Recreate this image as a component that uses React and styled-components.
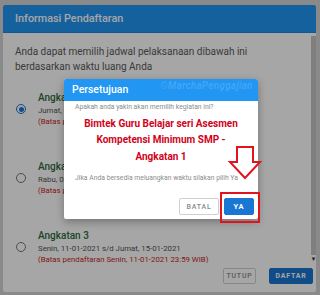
import React from "react";
import styled, { createGlobalStyle } from "styled-components";

const GlobalStyle = createGlobalStyle`
  html, body {
    margin: 0;
    padding: 0;
  }
  body {
    width: 320px;
    height: 295px;
    overflow: hidden;
    background: #d4d4d4;
    font-family: Roboto, "Noto Sans", Arial, sans-serif;
  }
  * { box-sizing: border-box; }
`;

const Page = styled.div`
  position: relative;
  width: 320px;
  height: 295px;
  padding: 5px 4px 3px 3px;
`;

const Dialog = styled.div`
  height: 100%;
  background: #fff;
  border-radius: 2px;
  display: flex;
  flex-direction: column;
  overflow: hidden;
`;

const DialogHeader = styled.div`
  height: 28px;
  flex-shrink: 0;
  background: #2196f3;
  color: #fff;
  font-size: 10.8px;
  font-weight: 500;
  display: flex;
  align-items: center;
  padding: 0 12px;
  border-bottom: 1px solid #1e88e5;
`;

const Body = styled.div`
  flex: 1;
  display: flex;
  overflow: hidden;
`;

const Content = styled.div`
  flex: 1;
  padding: 11px 0 0 12px;
`;

const Intro = styled.p`
  margin: 0;
  font-size: 10px;
  line-height: 15px;
  color: #5a5a5a;
`;

const List = styled.div`
  margin-top: 17px;
  display: flex;
  flex-direction: column;
  gap: 33px;
`;

const Item = styled.label`
  display: flex;
  align-items: center;
  gap: 12px;
`;

const Radio = styled.span`
  margin-left: 1px;
  width: 10px;
  height: 10px;
  border-radius: 50%;
  border: 1.3px solid ${(p) => (p.$checked ? "#1976d2" : "#777")};
  display: flex;
  align-items: center;
  justify-content: center;
  flex-shrink: 0;
  &::after {
    content: "";
    width: 5px;
    height: 5px;
    border-radius: 50%;
    background: ${(p) => (p.$checked ? "#1976d2" : "transparent")};
  }
`;

const ItemText = styled.div`
  display: flex;
  flex-direction: column;
  white-space: nowrap;
`;

const ItemTitle = styled.span`
  font-size: 10px;
  line-height: 14px;
  font-weight: 500;
  color: #2f6b3c;
`;

const ItemDate = styled.span`
  font-size: 7.8px;
  line-height: 11px;
  color: ${(p) => (p.$warn ? "#c62828" : "#555")};
`;

const ScrollTrack = styled.div`
  width: 5px;
  margin-top: 3px;
  display: flex;
  flex-direction: column;
  align-items: center;
`;

const ScrollThumb = styled.div`
  width: 5px;
  flex: 1;
  background: #c4c4c4;
`;

const ScrollArrow = styled.span`
  font-size: 6px;
  line-height: 8px;
  color: #333;
`;

const Footer = styled.div`
  height: 29px;
  flex-shrink: 0;
  display: flex;
  justify-content: flex-end;
  align-items: flex-start;
  gap: 13px;
  padding: 5px 3px 0 0;
`;

const Button = styled.button`
  height: ${(p) => p.$h || 16}px;
  width: ${(p) => p.$w}px;
  padding: 0;
  border-radius: 2px;
  font-family: inherit;
  font-size: ${(p) => p.$fs || 7}px;
  font-weight: ${(p) => (p.$primary ? 700 : 500)};
  letter-spacing: 0.8px;
  color: ${(p) => (p.$primary ? "#fff" : "#8a8a8a")};
  background: ${(p) => (p.$primary ? "#1976d2" : "#fff")};
  border: 1px solid ${(p) => (p.$primary ? "#1976d2" : "#d0d0d0")};
  display: flex;
  align-items: center;
  justify-content: center;
`;

const Backdrop = styled.div`
  position: absolute;
  inset: 0;
  background: rgba(0, 0, 0, 0.35);
  display: flex;
  align-items: center;
  justify-content: center;
  padding: 3px 0 0 2px;
`;

const Confirm = styled.div`
  width: 194px;
  background: #fff;
  border-radius: 2px;
  box-shadow: 0 3px 8px rgba(0, 0, 0, 0.3);
  overflow: hidden;
`;

const ConfirmHeader = styled.div`
  height: 22px;
  background: #2196f3;
  color: #fff;
  font-size: 10.5px;
  font-weight: 500;
  display: flex;
  align-items: center;
  padding: 0 8px;
`;

const ConfirmBody = styled.div`
  padding: 1px 4px 4px 11px;
`;

const Note = styled.p`
  margin: 0;
  font-size: 6.8px;
  line-height: 10px;
  color: #8c8c8c;
  white-space: nowrap;
`;

const Headline = styled.p`
  margin: 4px 7px 8px 0;
  text-align: center;
  font-size: 10px;
  line-height: 16.5px;
  font-weight: 700;
  color: #d0021b;
`;

const Actions = styled.div`
  margin-top: 15px;
  display: flex;
  justify-content: flex-end;
  gap: 5px;
`;

const Watermark = styled.span`
  position: absolute;
  left: 160px;
  top: 80px;
  font-size: 10px;
  font-style: italic;
  font-weight: 700;
  color: rgba(190, 220, 255, 0.22);
  letter-spacing: 0.2px;
  pointer-events: none;
`;

const Marks = styled.svg`
  position: absolute;
  left: 0;
  top: 0;
  pointer-events: none;
`;

const batches = [
  {
    title: "Angkatan 1",
    date: "Jumat, 01-01-2021 s/d Senin, 04-01-2021",
    limit: "(Batas pendaftaran Jumat, 01-01-2021 23:59 WIB)",
    checked: true,
  },
  {
    title: "Angkatan 2",
    date: "Rabu, 06-01-2021 s/d Sabtu, 09-01-2021",
    limit: "(Batas pendaftaran Rabu, 06-01-2021 23:59 WIB)",
  },
  {
    title: "Angkatan 3",
    date: "Senin, 11-01-2021 s/d Jumat, 15-01-2021",
    limit: "(Batas pendaftaran Senin, 11-01-2021 23:59 WIB)",
  },
];

export default function App() {
  return (
    <Page>
      <GlobalStyle />
      <Dialog>
        <DialogHeader>Informasi Pendaftaran</DialogHeader>
        <Body>
          <Content>
            <Intro>
              Anda dapat memilih jadwal pelaksanaan dibawah ini
              <br />
              berdasarkan waktu luang Anda
            </Intro>
            <List>
              {batches.map((b) => (
                <Item key={b.title}>
                  <Radio $checked={b.checked} />
                  <ItemText>
                    <ItemTitle>{b.title}</ItemTitle>
                    <ItemDate>{b.date}</ItemDate>
                    <ItemDate $warn>{b.limit}</ItemDate>
                  </ItemText>
                </Item>
              ))}
            </List>
          </Content>
          <ScrollTrack>
            <ScrollThumb />
            <ScrollArrow>▼</ScrollArrow>
          </ScrollTrack>
        </Body>
        <Footer>
          <Button $w={33}>TUTUP</Button>
          <Button $primary $w={44}>DAFTAR</Button>
        </Footer>
      </Dialog>

      <Backdrop>
        <Confirm>
          <ConfirmHeader>Persetujuan</ConfirmHeader>
          <ConfirmBody>
            <Note>Apakah anda yakin akan memilih kegiatan ini?</Note>
            <Headline>
              Bimtek Guru Belajar seri Asesmen
              <br />
              Kompetensi Minimum SMP -
              <br />
              Angkatan 1
            </Headline>
            <Note>Jika Anda bersedia meluangkan waktu silakan pilih Ya</Note>
            <Actions>
              <Button $h={17} $w={40} $fs={7}>BATAL</Button>
              <Button $primary $h={17} $w={30} $fs={7.5}>YA</Button>
            </Actions>
          </ConfirmBody>
        </Confirm>
      </Backdrop>

      <Watermark>©MarchaPenggajian</Watermark>

      <Marks width="320" height="295" viewBox="0 0 320 295">
        <polygon
          points="237,147 253,147 253,162 260,162 245,178 230,162 237,162"
          fill="none"
          stroke="#e0141e"
          strokeWidth="2"
          strokeLinejoin="miter"
        />
        <rect x="221" y="193" width="38" height="29" fill="none" stroke="#e0141e" strokeWidth="2" />
      </Marks>
    </Page>
  );
}
